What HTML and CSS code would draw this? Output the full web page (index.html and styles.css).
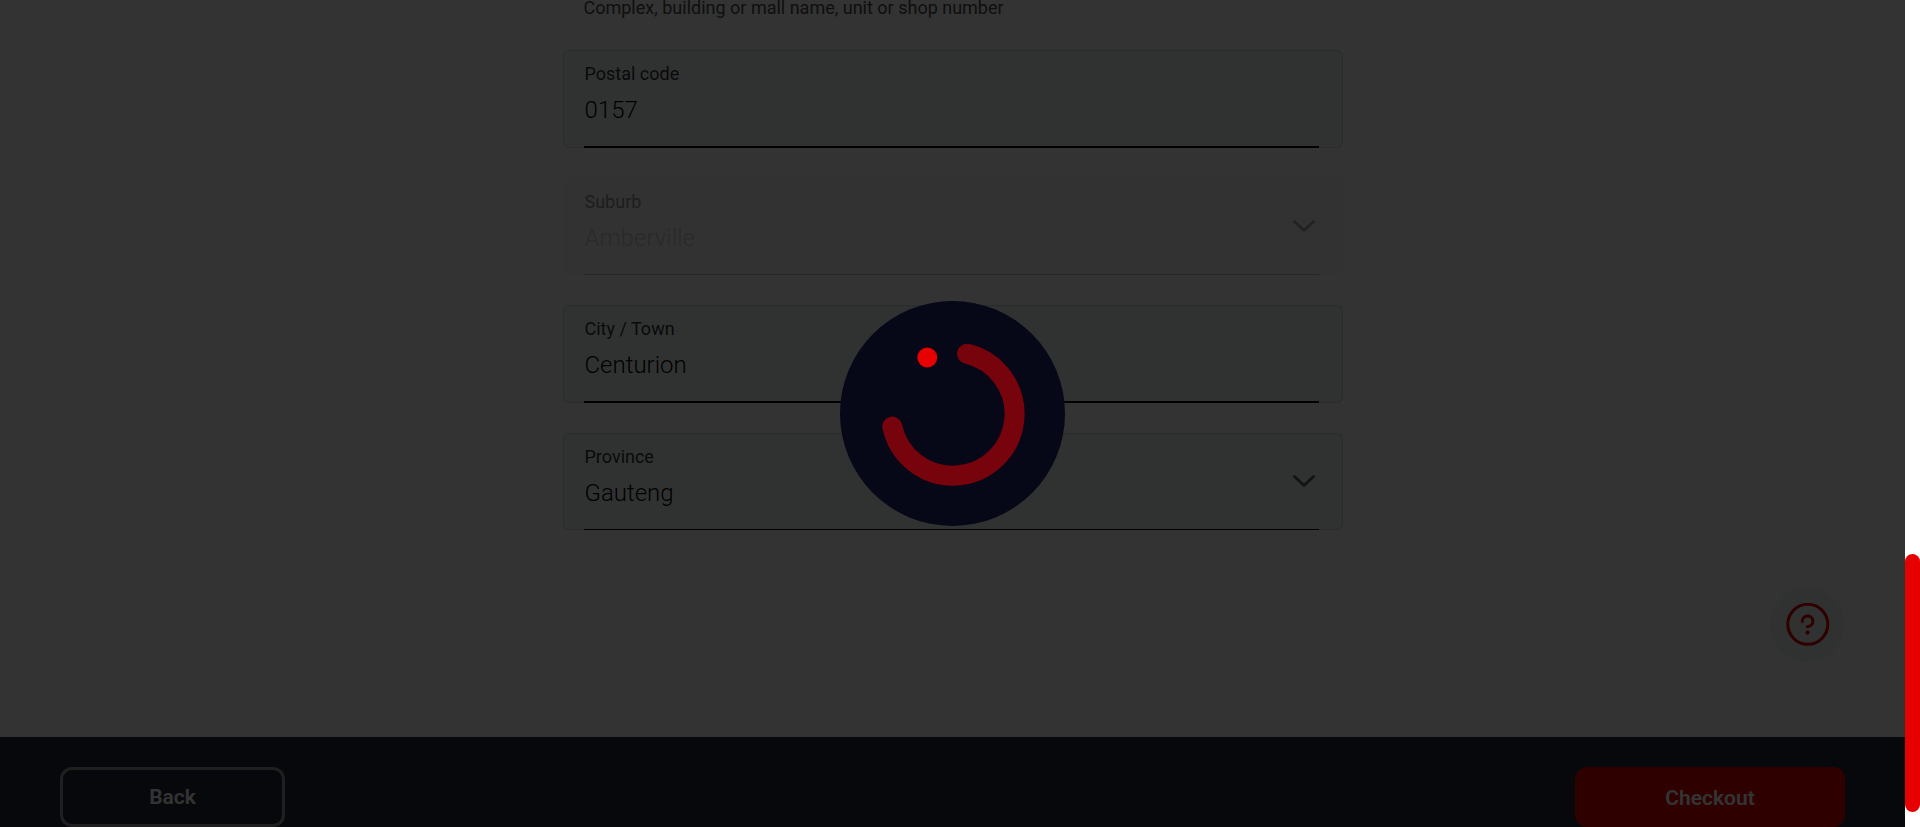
FILE: index.html
```html
<!DOCTYPE html>
<html lang="en">
<head>
<meta charset="utf-8">
<title>Delivery address</title>
<link rel="stylesheet" href="styles.css">
</head>
<body>
<div class="window">
  <div class="page">
    <main class="content">
      <form class="form" id="address">
        <p class="hint">Complex, building or mall name, unit or shop number</p>
        <div class="field">
          <label class="label" for="postal">Postal code</label>
          <input class="control" id="postal" type="text" value="0157">
        </div>
        <div class="field field-select field-disabled">
          <label class="label" for="suburb">Suburb</label>
          <select class="control" id="suburb" disabled><option>Amberville</option></select>
          <svg class="chevron" viewBox="0 0 24 14" aria-hidden="true"><path d="M2.500 2.500 12 11.500l9.500-9"/></svg>
        </div>
        <div class="field">
          <label class="label" for="city">City / Town</label>
          <input class="control" id="city" type="text" value="Centurion">
        </div>
        <div class="field field-select">
          <label class="label" for="province">Province</label>
          <select class="control" id="province"><option>Gauteng</option></select>
          <svg class="chevron" viewBox="0 0 24 14" aria-hidden="true"><path d="M2.500 2.500 12 11.500l9.500-9"/></svg>
        </div>
      </form>
      <button class="help" type="button" aria-label="Help">
        <svg class="help-icon" viewBox="0 0 44 44" aria-hidden="true">
          <circle cx="21.800" cy="21.300" r="20"/>
          <path d="M16.300 18.600a5.300 5.300 0 1 1 6.600 4.800q-.9.300-1.600.4"/>
          <circle class="help-dot" cx="21.500" cy="29.600" r="2.200"/>
        </svg>
      </button>
    </main>
    <footer class="actions">
      <button class="button button-outline" type="button">Back</button>
      <button class="button button-primary" type="submit" form="address">Checkout</button>
    </footer>
    <div class="overlay" role="status" aria-label="Loading">
      <svg class="spinner" viewBox="0 0 225 225" aria-hidden="true">
        <circle class="spinner-disc" cx="112.500" cy="112.500" r="112.500"/>
        <path class="spinner-arc" d="M127 52.700A61.800 61.800 0 1 1 52.300 125.500"/>
        <circle class="spinner-dot" cx="87.300" cy="56.500" r="10"/>
      </svg>
    </div>
  </div>
  <div class="scroll-track"><div class="scroll-thumb"></div></div>
</div>
</body>
</html>
```

FILE: styles.css
```css
* {
  box-sizing: border-box;
}

body {
  margin: 0;
  font-family: Roboto, "Liberation Sans", sans-serif;
  background: #fff;
  color: #000;
}

.window {
  display: flex;
  height: 100vh;
  overflow: hidden;
}

.page {
  position: relative;
  flex: 1;
  display: flex;
  flex-direction: column;
}

.content {
  flex: 1;
  display: flex;
  flex-direction: column;
  justify-content: space-between;
}

.form {
  width: 100%;
  max-width: 780px;
  margin: 0 auto;
  display: flex;
  flex-direction: column;
  gap: 30px;
}

.hint {
  height: 20px;
  margin: 0;
  padding: 0 21px;
  font-size: 18px;
  line-height: 16px;
  color: #4a4d4e;
}

.field {
  position: relative;
  display: flex;
  flex-direction: column;
  padding: 11px 23px 0 20px;
  border: 1px solid #d2d8d6;
  border-bottom: 0;
  border-radius: 6px;
  background: #f1faf6;
  box-shadow: inset 0 -1px #d2d8d6;
}

.label {
  font-size: 18px;
  line-height: 24px;
  padding-left: 1px;
  color: #303337;
}

.control {
  appearance: none;
  width: 100%;
  height: 62px;
  margin: 0;
  padding: 0 0 12px 1px;
  border: 0;
  border-bottom: 2px solid #000;
  border-radius: 0;
  background: transparent;
  font: inherit;
  font-size: 24px;
  font-weight: 350;
  color: #000;
  opacity: 1;
}

.field-select .control {
  height: 61px;
  border-bottom-width: 1px;
}

.field-disabled {
  border-color: #f9fafa;
  background: #fafafa;
  box-shadow: none;
}

.field-disabled .label {
  color: #909395;
}

.field-disabled .control {
  color: #cdcdcd;
  border-bottom-color: #bebebe;
}

.chevron {
  position: absolute;
  top: 40px;
  right: 26px;
  width: 24px;
  height: 14px;
  fill: none;
  stroke: #5f6170;
  stroke-width: 3;
  stroke-linecap: round;
  stroke-linejoin: round;
}

.field-disabled .chevron {
  stroke: #aaacae;
}

.help {
  align-self: flex-end;
  display: grid;
  place-items: center;
  width: 75px;
  height: 75px;
  margin: 0 60px 75px 0;
  padding: 0;
  border: 0;
  border-radius: 50%;
  background: #f1faf6;
}

.help-icon {
  width: 44px;
  height: 44px;
  fill: none;
  stroke: #e60000;
  stroke-width: 3;
  stroke-linecap: round;
}

.help-dot {
  fill: #e60000;
  stroke: none;
}

.actions {
  display: flex;
  justify-content: space-between;
  padding: 30px 60px 0;
  background: #232837;
}

.button {
  height: 60px;
  padding: 0;
  border: 0;
  border-radius: 12px;
  font: inherit;
  font-size: 21px;
  font-weight: 600;
  color: #fff;
}

.button-outline {
  width: 225px;
  border: 3px solid #999;
  background: transparent;
}

.button-primary {
  width: 270px;
  padding-top: 2px;
  background: #e60000;
}

.overlay {
  position: absolute;
  inset: 0;
  display: grid;
  place-items: center;
  background: rgba(0, 0, 0, 0.8);
}

.spinner {
  width: 225px;
  height: 225px;
}

.spinner-disc {
  fill: #060717;
}

.spinner-arc {
  fill: none;
  stroke: #77030c;
  stroke-width: 20;
  stroke-linecap: round;
}

.spinner-dot {
  fill: #e60000;
}

.scroll-track {
  display: flex;
  flex-direction: column;
  justify-content: flex-end;
  width: 15px;
  padding-bottom: 15px;
  background: #fff;
}

.scroll-thumb {
  height: 258px;
  border-radius: 8px;
  background: #e60000;
}
```
